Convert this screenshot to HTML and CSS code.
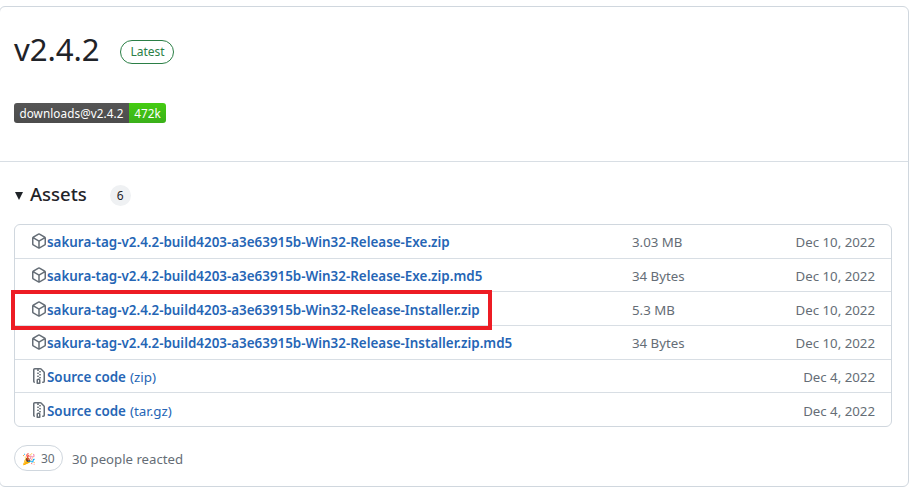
FILE: index.html
```html
<!DOCTYPE html>
<html lang="en">
<head>
<meta charset="utf-8">
<title>v2.4.2</title>
<link rel="stylesheet" href="styles.css">
</head>
<body>
<svg class="defs" width="0" height="0" aria-hidden="true">
  <symbol id="pkg" viewBox="0 0 16 16"><path fill="currentColor" d="m8.878.392 5.25 3.045c.54.314.872.89.872 1.514v6.098a1.75 1.75 0 0 1-.872 1.514l-5.25 3.045a1.75 1.75 0 0 1-1.756 0l-5.25-3.045A1.75 1.75 0 0 1 1 11.049V4.951c0-.624.332-1.201.872-1.514L7.122.392a1.75 1.75 0 0 1 1.756 0ZM7.875 1.69l-4.63 2.685L8 7.133l4.755-2.758-4.63-2.685a.248.248 0 0 0-.25 0ZM2.5 5.677v5.372c0 .09.047.171.125.216l4.625 2.683V8.432Zm6.25 8.271 4.625-2.683a.25.25 0 0 0 .125-.216V5.677L8.75 8.432Z"/></symbol>
  <symbol id="zip" viewBox="0 0 16 16"><path fill="currentColor" d="M3.5 1.75v11.5c0 .09.048.173.126.217a.75.75 0 0 1-.752 1.298A1.748 1.748 0 0 1 2 13.25V1.75C2 .784 2.784 0 3.75 0h5.586c.464 0 .909.185 1.237.513l2.914 2.914c.329.328.513.773.513 1.237v8.586A1.75 1.75 0 0 1 12.25 15h-.5a.75.75 0 0 1 0-1.5h.5a.25.25 0 0 0 .25-.25V4.664a.25.25 0 0 0-.073-.177L9.513 1.573a.25.25 0 0 0-.177-.073H7.25a.75.75 0 0 1 0 1.5h-.5a.75.75 0 0 1 0-1.5h-3a.25.25 0 0 0-.25.25Zm3.75 8.75h.5c.966 0 1.75.784 1.75 1.75v3a.75.75 0 0 1-.75.75h-2.5a.75.75 0 0 1-.75-.75v-3c0-.966.784-1.75 1.75-1.75ZM6 5.25a.75.75 0 0 1 .75-.75h.5a.75.75 0 0 1 0 1.5h-.5A.75.75 0 0 1 6 5.25Zm.75 2.25h.5a.75.75 0 0 1 0 1.5h-.5a.75.75 0 0 1 0-1.5ZM8 6.75A.75.75 0 0 1 8.75 6h.5a.75.75 0 0 1 0 1.5h-.5A.75.75 0 0 1 8 6.75ZM8.75 3h.5a.75.75 0 0 1 0 1.5h-.5a.75.75 0 0 1 0-1.5ZM8 9.75A.75.75 0 0 1 8.75 9h.5a.75.75 0 0 1 0 1.5h-.5A.75.75 0 0 1 8 9.75Zm-1 2.5v2.25h1v-2.25a.25.25 0 0 0-.25-.25h-.5a.25.25 0 0 0-.25.25Z"/></symbol>
</svg>
<main class="release">
  <section class="head">
    <div class="title-row">
      <h1 class="version">v2.4.2</h1>
      <span class="latest">Latest</span>
    </div>
    <div class="badge"><span class="badge-l">downloads@v2.4.2</span><span class="badge-r">472k</span></div>
  </section>
  <section class="body">
    <div class="assets-head">
      <span class="caret"></span>
      <h2 class="assets-title">Assets</h2>
      <span class="counter">6</span>
    </div>
    <ul class="assets">
      <li class="asset"><span class="asset-name"><svg class="icon"><use href="#pkg"/></svg><a class="link">sakura-tag-v2.4.2-build4203-a3e63915b-Win32-Release-Exe.zip</a></span><span class="size">3.03 MB</span><span class="date">Dec 10, 2022</span></li>
      <li class="asset"><span class="asset-name"><svg class="icon"><use href="#pkg"/></svg><a class="link">sakura-tag-v2.4.2-build4203-a3e63915b-Win32-Release-Exe.zip.md5</a></span><span class="size">34 Bytes</span><span class="date">Dec 10, 2022</span></li>
      <li class="asset"><span class="asset-name"><svg class="icon"><use href="#pkg"/></svg><a class="link">sakura-tag-v2.4.2-build4203-a3e63915b-Win32-Release-Installer.zip</a></span><span class="size">5.3 MB</span><span class="date">Dec 10, 2022</span></li>
      <li class="asset"><span class="asset-name"><svg class="icon"><use href="#pkg"/></svg><a class="link">sakura-tag-v2.4.2-build4203-a3e63915b-Win32-Release-Installer.zip.md5</a></span><span class="size">34 Bytes</span><span class="date">Dec 10, 2022</span></li>
      <li class="asset"><span class="asset-name"><svg class="icon"><use href="#zip"/></svg><a class="link">Source code</a><span class="ext">(zip)</span></span><span class="date">Dec 4, 2022</span></li>
      <li class="asset"><span class="asset-name"><svg class="icon"><use href="#zip"/></svg><a class="link">Source code</a><span class="ext">(tar.gz)</span></span><span class="date">Dec 4, 2022</span></li>
    </ul>
    <div class="reactions">
      <span class="pill"><span class="tada">🎉</span><span>30</span></span>
      <span class="react-text">30 people reacted</span>
    </div>
  </section>
</main>
<div class="highlight"></div>
</body>
</html>
```
FILE: styles.css
```css
* { box-sizing: border-box; }
html, body { margin: 0; height: 494px; overflow: hidden; background: #fff; }
body {
  padding: 6px 5px 0 0;
  font-family: "Noto Sans", "Open Sans", sans-serif;
  color: #1f2328;
  position: relative;
}
.defs { position: absolute; }
.release {
  height: 481px;
  margin-left: -1px;
  border: 1px solid #d0d7de;
  border-radius: 6px;
  display: flex;
  flex-direction: column;
}
.head {
  height: 155px;
  padding: 26px 0 0 14px;
  border-bottom: 1px solid #d8dee4;
}
.title-row { display: flex; align-items: center; height: 36px; }
.version { margin: 0 0 4px; font-size: 31.2px; font-weight: 400; line-height: 36px; letter-spacing: -.1px; }
.latest {
  margin: 2px 0 0 21px;
  width: 54px;
  height: 24px;
  border: 1px solid #2b7f46;
  border-radius: 12px;
  color: #2b7f46;
  font-size: 12px;
  font-weight: 400;
  line-height: 22px;
  text-align: center;
}
.badge {
  display: inline-flex;
  margin-top: 34px;
  height: 20px;
  border-radius: 3px;
  overflow: hidden;
  color: #fff;
  font-size: 11.7px;
  line-height: 20px;
  letter-spacing: .1px;
}
.badge-l { width: 115px; background: linear-gradient(#555, #4c4c4c); text-align: center; white-space: nowrap; }
.badge-r { width: 37px; background: linear-gradient(#4c1, #3ab01a); text-align: center; }
.body { padding: 18px 16px 0 14px; }
.assets-head { display: flex; align-items: center; height: 28px; }
.caret {
  width: 0; height: 0;
  margin: 3px 0 0 1px;
  border-left: 4.5px solid transparent;
  border-right: 4.5px solid transparent;
  border-top: 8px solid #1f2328;
}
.assets-title { margin: 0 0 0 7px; font-size: 18.5px; font-weight: 500; line-height: 28px; }
.counter {
  margin-left: 23px;
  margin-top: 3px;
  width: 21px; height: 21px;
  border-radius: 50%;
  background: #eff1f3;
  font-size: 12px;
  line-height: 21px;
  text-align: center;
}
.assets {
  list-style: none;
  margin: 16px 0 0;
  padding: 0;
  height: 203px;
  border: 1px solid #d0d7de;
  border-radius: 6px;
  display: flex;
  flex-direction: column;
}
.asset {
  flex: 1;
  display: flex;
  align-items: center;
  padding: 0 16px;
  font-size: 13.25px;
  color: #656d76;
  border-bottom: 1px solid #d8dee4;
}
.asset:last-child { border-bottom: 0; }
.asset-name { display: flex; align-items: center; width: 601px; white-space: nowrap; }
.icon { width: 16px; height: 16px; flex: none; color: #656d76; }
.link { color: #2565b5; font-weight: 600; font-size: 13.4px; padding-top: 2px; }
.ext { margin-left: 4px; color: #2565b5; font-size: 13.4px; padding-top: 2px; }
.size { white-space: nowrap; padding-top: 2px; }
.date { margin-left: auto; white-space: nowrap; padding-top: 2px; }
.reactions { display: flex; align-items: center; margin-top: 18px; }
.pill {
  display: flex;
  align-items: center;
  gap: 7px;
  width: 49px;
  height: 26px;
  padding-left: 7px;
  border: 1px solid #d0d7de;
  border-radius: 13px;
  font-size: 12px;
  color: #656d76;
}
.tada { font-size: 11px; width: 12px; }
.react-text { margin-left: 9px; font-size: 13.2px; color: #656d76; padding-top: 2px; }
.highlight {
  position: absolute;
  left: 11px;
  top: 290px;
  width: 481px;
  height: 40px;
  border: 4px solid #ed1c24;
}
```
